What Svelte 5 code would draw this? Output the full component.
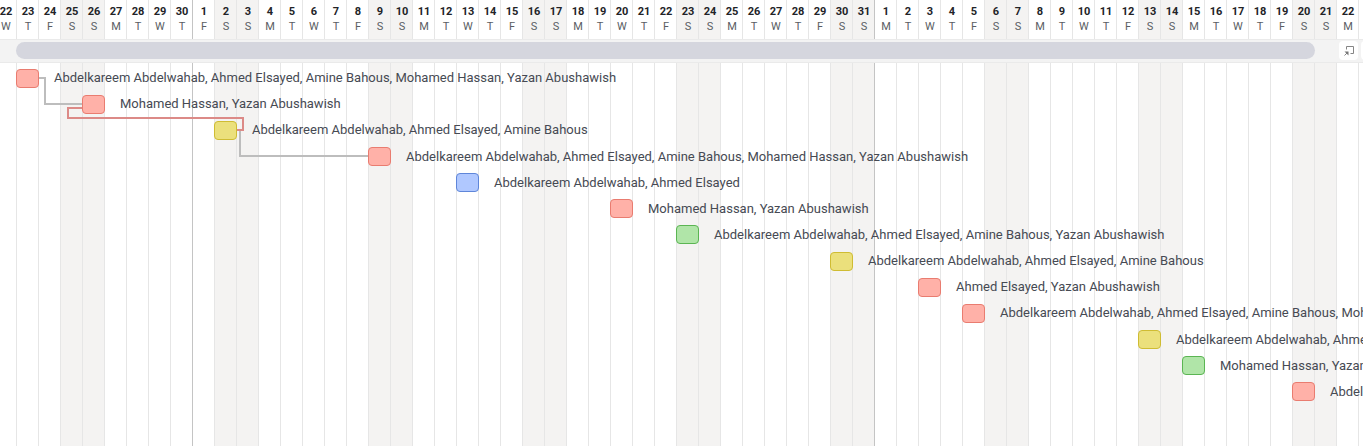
<script>
  const letters = ['M', 'T', 'W', 'T', 'F', 'S', 'S'];
  const months = [
    { from: 22, to: 30 },
    { from: 1, to: 31 },
    { from: 1, to: 23 }
  ];

  const days = months
    .flatMap((month, m) =>
      Array.from({ length: month.to - month.from + 1 }, (_, i) => ({
        date: month.from + i,
        monthStart: m > 0 && i === 0
      }))
    )
    .map((day, i) => {
      const weekday = (i + 2) % 7;
      return { ...day, letter: letters[weekday], weekend: weekday > 4 };
    });

  const abdel = 'Abdelkareem Abdelwahab';
  const ahmed = 'Ahmed Elsayed';
  const amine = 'Amine Bahous';
  const mohamed = 'Mohamed Hassan';
  const yazan = 'Yazan Abushawish';
  const everyone = [abdel, ahmed, amine, mohamed, yazan];

  const tasks = [
    { column: 2, color: 'red', people: everyone },
    { column: 5, color: 'red', people: [mohamed, yazan] },
    { column: 11, color: 'yellow', people: [abdel, ahmed, amine] },
    { column: 18, color: 'red', people: everyone },
    { column: 22, color: 'blue', people: [abdel, ahmed] },
    { column: 29, color: 'red', people: [mohamed, yazan] },
    { column: 32, color: 'green', people: [abdel, ahmed, amine, yazan] },
    { column: 39, color: 'yellow', people: [abdel, ahmed, amine] },
    { column: 43, color: 'red', people: [ahmed, yazan] },
    { column: 45, color: 'red', people: everyone },
    { column: 53, color: 'yellow', people: [abdel, ahmed, amine] },
    { column: 55, color: 'green', people: [mohamed, yazan] },
    { column: 60, color: 'red', people: everyone }
  ];
</script>

<main class="gantt">
  <div class="days">
    {#each days as day}
      <div class="day" class:weekend={day.weekend} class:month-start={day.monthStart}>
        <b>{day.date}</b>
        <span>{day.letter}</span>
      </div>
    {/each}
  </div>

  <div class="content">
    <div class="summary">
      <div class="summary-bar"></div>
      <button class="tool" aria-label="Collapse group">
        <svg width="12" height="12" viewBox="0 0 12 12" fill="none" stroke="#858585">
          <path d="M3.5 4.5v-3h7v7h-3" />
          <path d="M1.5 10.5l3-3" />
          <path d="M1.5 6.5h4v4z" fill="#777" stroke="none" />
        </svg>
      </button>
      <button class="tool" aria-label="Group options"></button>
    </div>

    <div class="rows">
      {#each tasks as task}
        <div class="row">
          <div class="task {task.color}" style="grid-column: {task.column}"></div>
          <span class="people" style="grid-column: {task.column + 1}">{task.people.join(', ')}</span>
        </div>
      {/each}
    </div>

    <svg class="links" width="480" height="120" viewBox="0 0 480 120" fill="none" stroke-width="2">
      <path d="M45 15h6v26h37" stroke="#bdbdbd" />
      <path d="M243 67h3v26h128" stroke="#bdbdbd" />
      <path d="M88 45h-14v10h175v12h-6" stroke="#dc8a87" />
    </svg>
  </div>
</main>

<style>
  :global(body) {
    margin: 0;
    background: #fff;
    overflow: hidden;
  }

  .gantt {
    display: grid;
    grid-template-columns: minmax(0, 1fr);
    min-height: 100vh;
    overflow: hidden;
    font-family: Roboto, sans-serif;
    color: #464a53;
  }

  .days,
  .content {
    grid-area: 1 / 1;
    margin-left: -6px;
  }

  .days {
    display: grid;
    grid-template-columns: repeat(63, 22px);
  }

  .day {
    display: flex;
    flex-direction: column;
    align-items: center;
    padding-top: 4px;
    border-left: 1px solid #e6e6e6;
    padding-left: 1px;
    font-size: 11px;
    line-height: 15px;
    color: #5a5d63;
  }

  .day b {
    font-weight: 700;
    color: #222327;
  }

  .weekend {
    background: #f4f3f2;
  }

  .month-start {
    border-left-color: #c4c4c4;
  }

  .content {
    position: relative;
    margin-top: 39px;
  }

  .summary {
    display: grid;
    grid-template-columns: repeat(63, 22px);
    align-items: center;
    box-sizing: border-box;
    height: 24px;
    padding-bottom: 1px;
    background: #f3f3f3;
    border-top: 1px solid #eaeaea;
    border-bottom: 1px solid #eaeaea;
  }

  .summary-bar {
    grid-column: 2 / 61;
    height: 17px;
    margin-right: -1px;
    border-radius: 9px;
    background: #d5d6de;
  }

  .tool {
    display: grid;
    place-items: center;
    width: 19px;
    height: 19px;
    margin-left: 3px;
    padding: 0;
    border: 0;
    border-radius: 4px;
    background: #fff;
  }

  .tool:first-of-type {
    grid-column: 62;
  }

  .rows {
    display: grid;
    grid-template-rows: repeat(13, 1fr);
    height: 340px;
    padding-top: 2px;
  }

  .row {
    display: grid;
    grid-template-columns: repeat(63, 22px);
    align-items: center;
  }

  .task {
    box-sizing: border-box;
    width: 23px;
    height: 19px;
    border: 1px solid;
    border-radius: 4px;
  }

  .red {
    background: #ffb1a8;
    border-color: #e97c70;
  }

  .yellow {
    background: #ebe07c;
    border-color: #cfbc33;
  }

  .blue {
    background: #b0c8ff;
    border-color: #5f86d9;
  }

  .green {
    background: #b0e5a8;
    border-color: #5bb553;
  }

  .people {
    width: max-content;
    padding-left: 16px;
    font-size: 13px;
    line-height: 18px;
    white-space: nowrap;
  }

  .links {
    position: absolute;
    top: 24px;
    left: 0;
    pointer-events: none;
  }
</style>
